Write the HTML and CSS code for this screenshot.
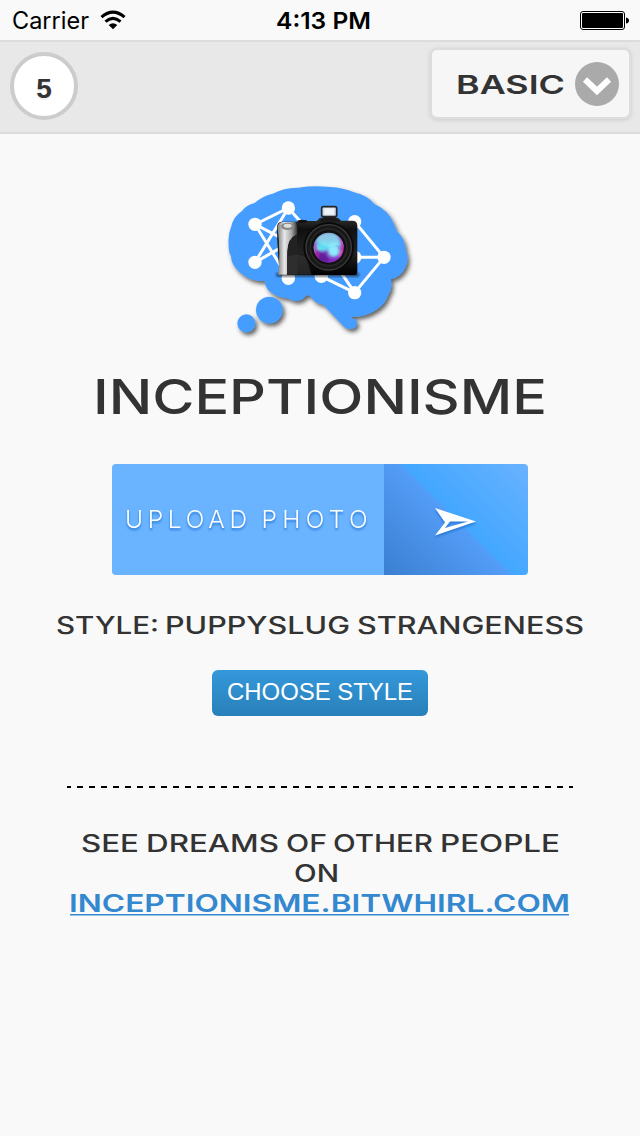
FILE: index.html
```html
<!DOCTYPE html>
<html lang="en">
<head>
<meta charset="utf-8">
<title>InceptionismE</title>
<link rel="stylesheet" href="styles.css">
</head>
<body>
<div class="status">
  <div class="carrier">
    <svg width="76" height="40"><text class="thin" x="-1" y="29" textLength="77" lengthAdjust="spacingAndGlyphs">Carrier</text></svg>
    <svg class="wifi" width="26" height="20" viewBox="0 0 26 20"><path d="M1.5 6.2Q13-3.8 24.5 6.2" fill="none" stroke="#000" stroke-width="3.1"/><path d="M5.5 10.6Q13 4.2 20.500 10.600" fill="none" stroke="#000" stroke-width="3.1"/><path d="M8.700 14Q13 10.400 17.300 14L13 18.300Z"/></svg>
  </div>
  <svg width="95" height="40"><text class="clock" x="2" y="29" textLength="95" lengthAdjust="spacingAndGlyphs">4:13 PM</text></svg>
  <svg class="battery" width="50" height="20" viewBox="0 0 50 20"><rect x=".5" y=".5" width="44" height="18" rx="2.500" fill="#fff" stroke="#000"/><rect x="2" y="2" width="41" height="15" rx="1"/><path d="M46 6.500Q49 7 49 9.500Q49 12 46 12.500Z"/></svg>
</div>
<header class="bar">
  <div class="count">5</div>
  <div class="mode">
    <svg width="108" height="40"><text class="wide semi mid" x="-1" y="30" textLength="109" lengthAdjust="spacingAndGlyphs">BASIC</text></svg>
    <svg width="44" height="44" viewBox="0 0 44 44"><circle cx="22" cy="22" r="22" fill="#aaa"/><path d="M10 17.500L22 29L34 17.500" fill="none" stroke="#fff" stroke-width="6"/></svg>
  </div>
</header>
<main class="page">
  <svg class="logo" width="200" height="170" viewBox="0 0 600 510">
    <defs>
      <filter id="shade" x="-10%" y="-10%" width="125%" height="125%"><feDropShadow dx="7" dy="9" stdDeviation="7" flood-color="#333" flood-opacity=".75"/></filter>
      <filter id="soft"><feGaussianBlur stdDeviation="3"/></filter>
      <linearGradient id="grip"><stop offset="0" stop-color="#777"/><stop offset=".35" stop-color="#e8e8e8"/><stop offset=".7" stop-color="#aaa"/><stop offset="1" stop-color="#333"/></linearGradient>
      <linearGradient id="body" x2="0" y2="1"><stop offset="0" stop-color="#333"/><stop offset=".2" stop-color="#101010"/><stop offset=".6" stop-color="#222"/><stop offset="1" stop-color="#000"/></linearGradient>
      <linearGradient id="glass" x1=".15" y1="0" x2=".4" y2="1"><stop offset="0" stop-color="#8fa9cf"/><stop offset=".35" stop-color="#62c4e8"/><stop offset=".52" stop-color="#6fe6f5"/><stop offset=".7" stop-color="#7a2fb4"/><stop offset="1" stop-color="#8a2bc8"/></linearGradient>
      <filter id="blend"><feGaussianBlur stdDeviation="4"/></filter>
      <clipPath id="lens"><circle cx="326" cy="218" r="45"/></clipPath>
    </defs>
    <g fill="#459dff" filter="url(#shade)">
      <path d="M26 210Q23 180 33 157Q39 126 65 109Q79 89 104 84Q130 61 158 56Q194 37 234 38Q282 31 330 36Q370 38 402 52Q440 60 463 87Q505 105 520 144Q528 157 528 166Q556 192 557 225Q568 252 557 276Q544 306 512 313Q519 339 506 357Q496 389 468 405Q436 427 395 426L394 430Q411 431 411 444Q411 460 395 461Q379 464 370 453L310 389Q286 388 268 361Q257 360 250 371Q225 386 204 370Q172 368 151 350Q136 340 134 318Q91 320 62 294Q33 270 33 244Q25 230 26 210Z"/>
      <circle cx="148" cy="405" r="40"/><circle cx="79" cy="445" r="27"/>
    </g>
    <g fill="none" stroke="#fff" stroke-width="9"><path d="M205 99L105 148L205 200M205 99L105 262L205 205M105 148L205 310M205 99L255 155M404 140L492 247L404 353L304 304M492 247H404M304 205L404 353"/></g>
    <g fill="#fff"><circle cx="205" cy="99" r="20"/><circle cx="105" cy="148" r="20"/><circle cx="105" cy="262" r="20"/><circle cx="205" cy="310" r="20"/><circle cx="304" cy="304" r="20"/><circle cx="404" cy="353" r="20"/><circle cx="492" cy="247" r="20"/><circle cx="404" cy="140" r="20"/><circle cx="404" cy="247" r="20"/></g>
    <rect x="168" y="293" width="250" height="12" rx="6" fill="#111" opacity=".6" filter="url(#soft)"/>
    <path d="M184 140H233Q247 131 263 138H290L300 128H354L364 137H397Q412 137 412 153V290Q412 300 400 300H180Q171 220 171 155Q172 142 184 140Z" fill="url(#body)"/>
    <path d="M172 155Q175 139 194 141H225Q232 143 232 170V178Q202 190 202 230V299H174Q183 230 172 155Z" fill="url(#grip)"/>
    <path d="M202 299V235Q202 196 232 178V299Z" fill="#222"/>
    <path d="M204 245Q232 231 258 246L275 299H204Z" fill="#333" opacity=".7"/>
    <ellipse cx="203" cy="154" rx="20" ry="11" fill="#888"/><ellipse cx="203" cy="152" rx="12" ry="6" fill="#ddd"/>
    <ellipse cx="247" cy="139" rx="15" ry="5" fill="#111"/>
    <path d="M313 123L319 115H337L343 123L360 140H297Z" fill="#191919"/>
    <rect x="305" y="95" width="45" height="30" rx="5" fill="#ccd6de" stroke="#252525" stroke-width="5"/><rect x="313" y="100" width="29" height="19" fill="#eef2f8"/>
    <circle cx="326" cy="217" r="76" fill="#090909"/><circle cx="326" cy="217" r="68" fill="#181818" stroke="#3c3c3c" stroke-width="4"/><circle cx="326" cy="217" r="55" fill="#111" stroke="#282828" stroke-width="5"/>
    <circle cx="326" cy="218" r="45" fill="url(#glass)"/>
    <g clip-path="url(#lens)"><g filter="url(#blend)">
      <path d="M281 210Q296 236 322 240L330 264H290Z" fill="#5b1590" opacity=".8"/>
      <path d="M360 178Q378 213 362 250" fill="none" stroke="#e020b0" stroke-width="11"/>
      <path d="M284 200Q282 230 294 246" fill="none" stroke="#c51fb0" stroke-width="8"/>
      <circle cx="341" cy="228" r="18" fill="#8cecfb"/><circle cx="311" cy="212" r="14" fill="#58dcf2" opacity=".8"/>
    </g><ellipse cx="325" cy="196" rx="31" ry="18" fill="#c9eafa" opacity=".3"/></g>
  </svg>
  <h1 class="title"><svg width="640" height="52"><text class="wide large" x="93" y="44" textLength="454" lengthAdjust="spacingAndGlyphs">INCEPTIONISME</text></svg></h1>
  <div class="upload">
    <div class="upload-label"><svg width="271" height="111"><text class="upload-text" y="64"><tspan x="13" textLength="122">UPLOAD</tspan> <tspan x="149.500" textLength="106">PHOTO</tspan></text></svg></div>
    <div class="upload-go"><svg width="46" height="34" viewBox="0 0 46 34"><path fill="#fff" fill-rule="evenodd" d="M2 2L43 15.500L2 29.500L12 16.500ZM17 15.500L12 22L35 15.500Z"/></svg></div>
  </div>
  <svg class="style-name" width="640" height="30"><text class="wide" y="24"><tspan x="56" textLength="103" lengthAdjust="spacingAndGlyphs">STYLE:</tspan> <tspan x="165" textLength="185" lengthAdjust="spacingAndGlyphs">PUPPYSLUG</tspan> <tspan x="357" textLength="227" lengthAdjust="spacingAndGlyphs">STRANGENESS</tspan></text></svg>
  <div class="choose"><svg width="188" height="46"><text class="choose-text" x="1" y="30" textLength="186" lengthAdjust="spacingAndGlyphs">CHOOSE STYLE</text></svg></div>
  <svg class="rule" width="506" height="2"><line x1="0" y1="1" x2="506" y2="1" stroke="#000" stroke-width="2" stroke-dasharray="6 6" stroke-dashoffset="2"/></svg>
  <svg class="dreams" width="640" height="100">
    <text class="wide" y="29"><tspan x="81" textLength="58" lengthAdjust="spacingAndGlyphs">SEE</tspan> <tspan x="146" textLength="133" lengthAdjust="spacingAndGlyphs">DREAMS</tspan> <tspan x="286" textLength="41" lengthAdjust="spacingAndGlyphs">OF</tspan> <tspan x="333" textLength="100" lengthAdjust="spacingAndGlyphs">OTHER</tspan> <tspan x="440" textLength="120" lengthAdjust="spacingAndGlyphs">PEOPLE</tspan></text>
    <text class="wide" x="294" y="59" textLength="45" lengthAdjust="spacingAndGlyphs">ON</text>
    <a href="#"><text class="wide semi link" x="69" y="89" textLength="501" lengthAdjust="spacingAndGlyphs">INCEPTIONISME.BITWHIRL.COM</text><rect x="70" y="91" width="499" height="1.500" fill="#3388cf"/></a>
  </svg>
</main>
</body>
</html>
```
FILE: styles.css
```css
* { box-sizing: border-box; }
body { margin: 0; width: 640px; min-height: 1136px; background: #f9f9f9; font-family: "Liberation Sans", sans-serif; color: #333; }
svg { display: block; flex: none; overflow: visible; }
.status { height: 40px; display: grid; grid-template-columns: 1fr 95px 1fr; align-items: center; padding: 0 10px 0 13px; }
.carrier { display: flex; align-items: center; gap: 11px; }
.wifi { margin-top: 2px; }
.battery { justify-self: end; margin-top: 2px; }
.thin { font: 400 24px Inter, sans-serif; fill: #000; }
.clock { font: 600 23.500px Inter, sans-serif; fill: #000; }
.bar { height: 94px; background: #e8e8e8; border-top: 2px solid #dcdcdc; border-bottom: 2px solid #dcdcdc; display: flex; justify-content: space-between; align-items: flex-start; padding: 6px 9px 0 10px; }
.count { width: 68px; height: 68px; margin-top: 4px; border: 4px solid #ccc; border-radius: 50%; background: #fff; font-size: 28px; font-weight: 700; line-height: 65px; text-align: center; text-shadow: 0 2px 1px #eee; }
.mode { width: 201px; height: 71px; border: 2px solid #ddd; border-radius: 7px; background: #f6f6f6; box-shadow: 0 1px 4px #ccc; display: flex; align-items: center; gap: 10px; padding: 0 9px 0 25px; }
.wide { font-family: Inter, sans-serif; font-size: 24px; font-weight: 500; fill: #333; }
.wide.mid { font-size: 26px; }
.wide.semi { font-weight: 600; }
.wide.large { font-size: 48px; }
.wide.link { fill: #3388cf; }
.page { display: flex; flex-direction: column; align-items: center; padding-top: 41px; }
.title { margin: 25px 0 0; font-size: 48px; }
.upload { display: flex; width: 416px; height: 111px; margin-top: 42px; border-radius: 4px; overflow: hidden; }
.upload-label { width: 272px; background: #69b3ff; }
.upload-text { font: 300 24.500px Inter, sans-serif; fill: #fff; filter: drop-shadow(0 2px 1px #2878d8); }
.upload-go { flex: 1; display: flex; align-items: center; justify-content: center; padding-top: 6px; background: linear-gradient(45deg, #3a7fd1 0%, #549df7 50%, #42a7ff 50%, #69b2ff 100%); }
.upload-go svg { filter: drop-shadow(0 2px 1px #2878d8); }
.style-name { margin-top: 35px; }
.choose { width: 216px; height: 46px; margin-top: 30px; padding-left: 14px; border-radius: 6px; background: linear-gradient(#3498db, #2980b9); }
.choose-text { font-size: 24px; fill: #fff; }
.rule { margin-top: 70px; }
.dreams { margin-top: 35px; }
```
